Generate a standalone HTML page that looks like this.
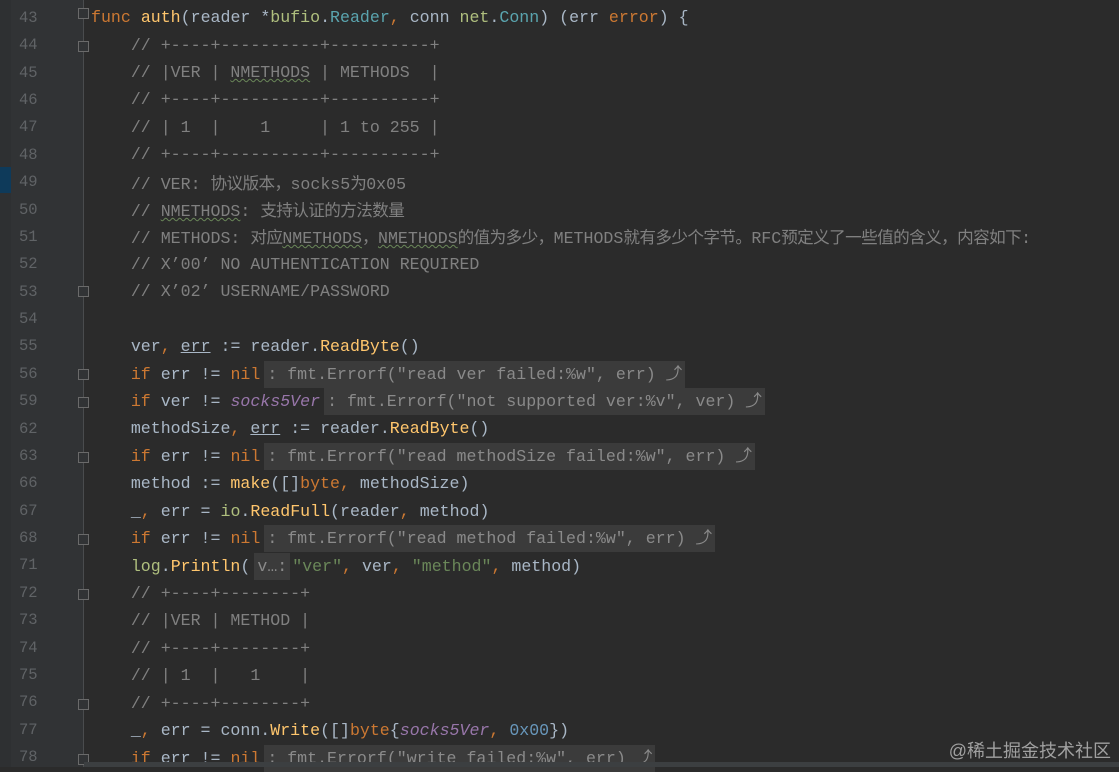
<!DOCTYPE html>
<html><head><meta charset="utf-8"><style>
body{margin:0;width:1119px;height:767px;background:#2b2b2b;overflow:hidden;position:relative;font-family:"Liberation Mono","Noto Sans CJK SC",monospace;font-size:16.6px;}
.strip{position:absolute;left:0;top:0;width:11px;height:767px;background:#2e3032}
.gut{position:absolute;left:11px;top:0;width:72px;height:767px;background:#313335}
.sep{position:absolute;left:83px;top:0;width:1px;height:767px;background:#4a4c4e}
.mark{position:absolute;left:0;top:167px;width:11px;height:26px;background:#0e3a5a}
.ln{position:absolute;left:19px;color:#606366;font-size:15.5px;line-height:27px}
.l{position:absolute;left:91px;white-space:pre;color:#a9b7c6;line-height:27px}
.c{color:#808080}.k{color:#cc7832}.f{color:#ffc66d}.t{color:#5aa4ae}.p{color:#afbf7e}.v{color:#9876aa;font-style:italic}.n{color:#6897bb}.s{color:#6a8759}
.cj{font-family:"Noto Sans CJK SC",sans-serif;letter-spacing:-0.6px}
.u{text-decoration:underline wavy #6a8759;text-decoration-thickness:1px}
.ul{text-decoration:underline}
.h{background:#3b3b3b;color:#8a8a8a;padding:4px 3px;margin-left:4px}
.fold{position:absolute;left:78px;width:9px;height:9px;border:1px solid #6a6a6a;background:#313335}
.bot{position:absolute;left:84px;top:762px;width:1035px;height:5px;background:#3c3f41}
.wm{position:absolute;right:8px;top:737px;color:#a0a0a0;font-family:"Liberation Sans","Noto Sans CJK SC",sans-serif;font-size:18px}
</style></head><body>
<div class="strip"></div><div class="gut"></div><div class="sep"></div><div class="mark"></div>
<div id="c"></div>
<div class="l" style="top:4px"><span class="k">func</span> <span class="f">auth</span>(reader *<span class="p">bufio</span>.<span class="t">Reader</span><span class="k">,</span> conn <span class="p">net</span>.<span class="t">Conn</span>) (err <span class="k">error</span>) {</div>
<div class="l c" style="top:32px">    // +----+----------+----------+</div>
<div class="l c" style="top:59px">    // |VER | <span class="u">NMETHODS</span> | METHODS  |</div>
<div class="l c" style="top:86px">    // +----+----------+----------+</div>
<div class="l c" style="top:114px">    // | 1  |    1     | 1 to 255 |</div>
<div class="l c" style="top:141px">    // +----+----------+----------+</div>
<div class="l c" style="top:169px">    // VER: <span class="cj">协议版本，</span>socks5<span class="cj">为</span>0x05</div>
<div class="l c" style="top:196px">    // <span class="u">NMETHODS</span>: <span class="cj">支持认证的方法数量</span></div>
<div class="l c" style="top:223px">    // METHODS: <span class="cj">对应</span><span class="u">NMETHODS</span><span class="cj">，</span><span class="u">NMETHODS</span><span class="cj">的值为多少，</span>METHODS<span class="cj">就有多少个字节。</span>RFC<span class="cj">预定义了一些值的含义，内容如下</span>:</div>
<div class="l c" style="top:251px">    // X’00’ NO AUTHENTICATION REQUIRED</div>
<div class="l c" style="top:278px">    // X’02’ USERNAME/PASSWORD</div>
<div class="l" style="top:333px">    ver<span class="k">,</span> <span class="ul">err</span> := reader.<span class="f">ReadByte</span>()</div>
<div class="l" style="top:361px">    <span class="k">if</span> err != <span class="k">nil</span><span class="h">: fmt.Errorf("read ver failed:%w", err) ⤴</span></div>
<div class="l" style="top:388px">    <span class="k">if</span> ver != <span class="v">socks5Ver</span><span class="h">: fmt.Errorf("not supported ver:%v", ver) ⤴</span></div>
<div class="l" style="top:415px">    methodSize<span class="k">,</span> <span class="ul">err</span> := reader.<span class="f">ReadByte</span>()</div>
<div class="l" style="top:443px">    <span class="k">if</span> err != <span class="k">nil</span><span class="h">: fmt.Errorf("read methodSize failed:%w", err) ⤴</span></div>
<div class="l" style="top:470px">    method := <span class="f">make</span>([]<span class="k">byte,</span> methodSize)</div>
<div class="l" style="top:498px">    _<span class="k">,</span> err = <span class="p">io</span>.<span class="f">ReadFull</span>(reader<span class="k">,</span> method)</div>
<div class="l" style="top:525px">    <span class="k">if</span> err != <span class="k">nil</span><span class="h">: fmt.Errorf("read method failed:%w", err) ⤴</span></div>
<div class="l" style="top:553px">    <span class="p">log</span>.<span class="f">Println</span>(<span class="h" style="margin-right:2px">v…:</span><span class="s">"ver"</span><span class="k">,</span> ver<span class="k">,</span> <span class="s">"method"</span><span class="k">,</span> method)</div>
<div class="l c" style="top:580px">    // +----+--------+</div>
<div class="l c" style="top:607px">    // |VER | METHOD |</div>
<div class="l c" style="top:635px">    // +----+--------+</div>
<div class="l c" style="top:662px">    // | 1  |   1    |</div>
<div class="l c" style="top:690px">    // +----+--------+</div>
<div class="l" style="top:717px">    _<span class="k">,</span> err = conn.<span class="f">Write</span>([]<span class="k">byte</span>{<span class="v">socks5Ver</span><span class="k">,</span> <span class="n">0x00</span>})</div>
<div class="l" style="top:745px">    <span class="k">if</span> err != <span class="k">nil</span><span class="h">: fmt.Errorf("write failed:%w", err) ⤴</span></div>
<div class="fold" style="top:8px"></div><div class="fold" style="top:41px"></div><div class="fold" style="top:286px"></div>
<div class="fold" style="top:369px"></div><div class="fold" style="top:397px"></div><div class="fold" style="top:452px"></div><div class="fold" style="top:534px"></div>
<div class="fold" style="top:589px"></div><div class="fold" style="top:699px"></div><div class="fold" style="top:754px"></div>
<div class="bot"></div>
<div class="wm">@稀土掘金技术社区</div>
<script>
var n=[43,44,45,46,47,48,49,50,51,52,53,54,55,56,59,62,63,66,67,68,71,72,73,74,75,76,77,78],h='';
n.forEach(function(x,i){h+='<div class="ln" style="top:'+(5+27.37*i)+'px">'+x+'</div>';});
document.getElementById('c').innerHTML=h;
</script>
</body></html>
